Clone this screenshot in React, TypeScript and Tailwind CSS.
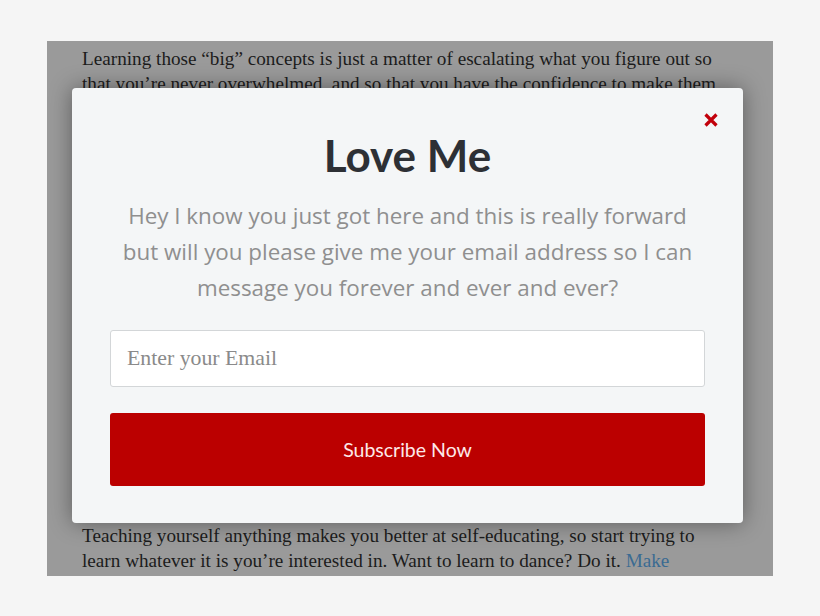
import React from "react";

export default function App() {
  return (
    <div className="w-[820px] h-[616px] bg-[#f5f5f5] pt-[41px] pl-[47px]">
      <div className="relative w-[726px] h-[535px] bg-[#9a9a9a] overflow-hidden flex flex-col justify-between px-[35px] pt-[5px] pb-[3px] text-[19.2px] leading-[25px] text-[#1c1c1c] [font-family:'Liberation_Serif',serif]">
        <p className="whitespace-nowrap">
          Learning those “big” concepts is just a matter of escalating what you figure out so
          <br />
          that you’re never overwhelmed, and so that you have the confidence to make them
        </p>
        <p className="whitespace-nowrap">
          Teaching yourself anything makes you better at self-educating, so start trying to
          <br />
          learn whatever it is you’re interested in. Want to learn to dance? Do it.{" "}
          <span className="text-[#3a6b92]">Make</span>
        </p>

        <div className="absolute left-[25px] top-[47px] w-[671px] h-[435px] bg-[#f4f6f7] rounded-[4px] shadow-[0_0_22px_rgba(0,0,0,0.4)] px-[38px] pt-[41px] flex flex-col">
          <button className="absolute right-[24px] top-[24px] w-[16px] h-[16px] flex items-center justify-center">
            <svg width="16" height="16" viewBox="0 0 16 16">
              <path d="M2.5 2.5 L13.5 13.5 M13.5 2.5 L2.5 13.5" stroke="#c2000b" strokeWidth="3.2" strokeLinecap="butt" />
            </svg>
          </button>
          <h1 className="text-center text-[44px] leading-[1.2] font-bold text-[#2d3035] [font-family:Lato,sans-serif]">
            Love Me
          </h1>
          <p className="mt-[16px] text-center text-[22.4px] leading-[36px] text-[#8f8f8f] [font-family:'Open_Sans',sans-serif]">
            Hey I know you just got here and this is really forward
            <br />
            but will you please give me your email address so I can
            <br />
            message you forever and ever and ever?
          </p>
          <div className="mt-[24px] h-[57px] bg-white border border-[#d3d6d8] rounded-[3px] flex items-center px-[16px]">
            <span className="text-[21.8px] text-[#8a8a8a] [font-family:'Liberation_Serif',serif]">Enter your Email</span>
          </div>
          <div className="mt-[26px] h-[73px] bg-[#bb0000] rounded-[3px] flex items-center justify-center">
            <span className="text-[19.5px] text-[#fde8e8] [font-family:Lato,sans-serif]">Subscribe Now</span>
          </div>
        </div>
      </div>
    </div>
  );
}
